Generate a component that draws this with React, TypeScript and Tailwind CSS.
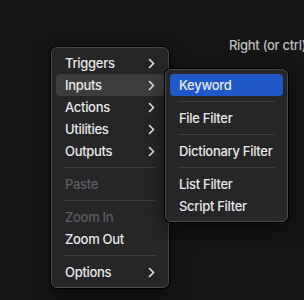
import { Fragment } from "react";

type Item = { label: string; sub?: boolean; disabled?: boolean; active?: "gray" | "blue" } | "sep";

const mainItems: Item[] = [
  { label: "Triggers", sub: true },
  { label: "Inputs", sub: true, active: "gray" },
  { label: "Actions", sub: true },
  { label: "Utilities", sub: true },
  { label: "Outputs", sub: true },
  "sep",
  { label: "Paste", disabled: true },
  "sep",
  { label: "Zoom In", disabled: true },
  { label: "Zoom Out" },
  "sep",
  { label: "Options", sub: true },
];

const subItems: Item[] = [
  { label: "Keyword", active: "blue" },
  "sep",
  { label: "File Filter" },
  "sep",
  { label: "Dictionary Filter" },
  "sep",
  { label: "List Filter" },
  { label: "Script Filter" },
];

const Chevron = () => (
  <svg width="7" height="11" viewBox="0 0 7 11" fill="none">
    <path d="M1.5 1.5L5.5 5.5L1.5 9.5" stroke="#e8e8e8" strokeWidth="1.6" strokeLinecap="round" strokeLinejoin="round" />
  </svg>
);

const Menu = ({ items, className }: { items: Item[]; className: string }) => (
  <div
    className={
      "absolute flex flex-col rounded-[6px] border border-[#4a4a4c] bg-[#262628] py-1 shadow-[0_0_0_1px_#000,0_8px_20px_rgba(0,0,0,0.5)] " +
      className
    }
  >
    {items.map((item, i) => (
      <Fragment key={i}>
        {item === "sep" ? (
          <div className="flex h-[11px] items-center px-[12px]">
            <div className="h-px w-full bg-[#3c3c3e]" />
          </div>
        ) : (
          <div
            className={
              "mx-[4px] flex h-[22px] items-center justify-between whitespace-nowrap rounded-[4px] pl-[9px] pr-[9px] " +
              (item.active === "gray" ? "bg-[#3d3d3f] " : "") +
              (item.active === "blue" ? "bg-[#2158c9] " : "") +
              (item.disabled ? "text-[#5e5e60]" : "text-[#e8e8e8]")
            }
          >
            <span className="mt-[2px]">{item.label}</span>
            {item.sub && <Chevron />}
          </div>
        )}
      </Fragment>
    ))}
  </div>
);

export default function App() {
  return (
    <div className="relative h-[300px] w-[304px] overflow-hidden bg-[#151515] font-['Inter','Noto_Sans',sans-serif] text-[13px] font-medium tracking-[-0.3px]">
      <div className="absolute left-[229px] top-[36px] whitespace-nowrap text-[#bdbdbd]">Right (or ctrl)</div>
      <Menu items={mainItems} className="left-[51px] top-[47px] w-[118px]" />
      <Menu items={subItems} className="left-[165px] top-[69px] w-[123px]" />
    </div>
  );
}
